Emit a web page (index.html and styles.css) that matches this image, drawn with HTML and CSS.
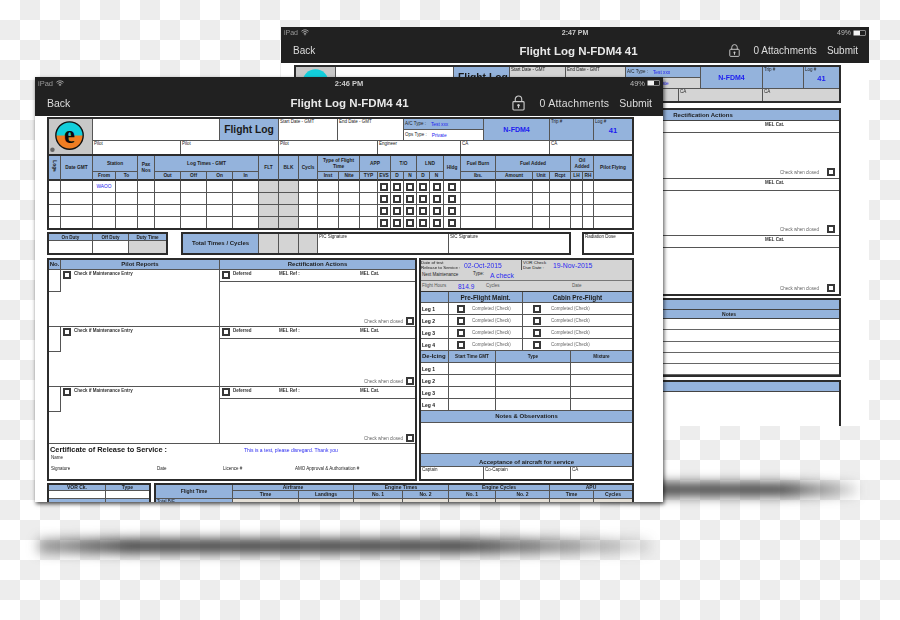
FILE: index.html
```html
<!DOCTYPE html>
<html lang="en">
<head>
<meta charset="utf-8">
<title>Flight Log</title>
<link rel="stylesheet" href="styles.css">
</head>
<body>
<div class="floor floor-back"></div>
<div class="floor floor-main"></div>

<section class="win win-back">
  <header class="bar">
    <div class="status">
      <span class="st-left">iPad <svg class="wifi" viewBox="0 0 10 8"><path d="M0.5 2.8a6.4 6.4 0 0 1 9 0M2 4.4a4.2 4.2 0 0 1 6 0M3.5 5.9a2 2 0 0 1 3 0"/><circle cx="5" cy="7" r=".8"/></svg></span>
      <span class="st-time">2:47 PM</span>
      <span class="st-right">49% <span class="batt"><span class="batt-fill"></span></span></span>
    </div>
    <nav class="nav">
      <span class="nav-back">Back</span>
      <span class="nav-title">Flight Log N-FDM4 41</span>
      <span class="nav-right">
        <svg class="lock" viewBox="0 0 14 17"><path d="M3.5 7V4.5a3.5 3.5 0 0 1 7 0V7"/><rect x="1" y="7" width="12" height="9" rx="1"/><circle cx="7" cy="11" r="1.3"/><path d="M7 11v3"/></svg>
        <span class="nav-att">0 Attachments</span>
        <span class="nav-sub">Submit</span>
      </span>
    </nav>
  </header>
  <div class="form form-back">
    <div class="box bhdr">
      <div class="c n-b logo-cell back-logo"><svg class="logo" viewBox="0 0 42 37"><circle class="lg-a" cx="21" cy="16.5" r="14"/></svg></div>
      <div class="c bh-blank"></div>
      <div class="c blue bh-fl"><span class="fl-title">Flight Log</span></div>
      <div class="c grey bh-sd"><span class="lbl">Start Date - GMT</span></div>
      <div class="c grey bh-ed"><span class="lbl">End Date - GMT</span></div>
      <div class="c blue bh-ac"><span class="lbl">A/C Type :</span><span class="val-s">Test xxx</span></div>
      <div class="c grey bh-ops"><span class="lbl">Ops Type :</span><span class="val-s">Private</span></div>
      <div class="c blue center bh-reg"><span class="val-b">N-FDM4</span></div>
      <div class="c blue bh-trip"><span class="lbl">Trip #</span></div>
      <div class="c blue bh-log n-r"><span class="lbl">Log #</span><span class="val-n">41</span></div>
      <div class="c grey n-b bh-r3a"><span class="lbl">Pilot</span></div>
      <div class="c grey n-b bh-r3b"><span class="lbl">CA</span></div>
      <div class="c grey n-b n-r bh-r3c"><span class="lbl">CA</span></div>
    </div>
    <div class="box bk-reports">
      <div class="bk-head"><span class="th-m bk-h1">Pilot Reports</span><span class="th-m bk-h2">Rectification Actions</span></div>
      <div class="bk-top"><span class="lbl-b">MEL Cat.</span></div>
      <div class="bk-body"><span class="lbl-g">Check when closed</span><span class="cb"></span></div>
      <div class="bk-top"><span class="lbl-b">MEL Cat.</span></div>
      <div class="bk-body"><span class="lbl-g">Check when closed</span><span class="cb"></span></div>
      <div class="bk-top"><span class="lbl-b">MEL Cat.</span></div>
      <div class="bk-body n-b"><span class="lbl-g">Check when closed</span><span class="cb"></span></div>
    </div>
    <div class="box bk-notes">
      <div class="bn-blue"></div>
      <div class="bn-blue bn-title"><span class="th-s">Notes</span></div>
      <div class="bn-row"></div>
      <div class="bn-row"></div>
      <div class="bn-row"></div>
      <div class="bn-row"></div>
      <div class="bn-row n-b"></div>
    </div>
    <div class="bk-last"><div class="bn-blue"></div></div>
  </div>
</section>

<section class="win win-main">
  <header class="bar">
    <div class="status">
      <span class="st-left">iPad <svg class="wifi" viewBox="0 0 10 8"><path d="M0.5 2.8a6.4 6.4 0 0 1 9 0M2 4.4a4.2 4.2 0 0 1 6 0M3.5 5.9a2 2 0 0 1 3 0"/><circle cx="5" cy="7" r=".8"/></svg></span>
      <span class="st-time">2:46 PM</span>
      <span class="st-right">49% <span class="batt"><span class="batt-fill"></span></span></span>
    </div>
    <nav class="nav">
      <span class="nav-back">Back</span>
      <span class="nav-title">Flight Log N-FDM4 41</span>
      <span class="nav-right">
        <svg class="lock" viewBox="0 0 14 17"><path d="M3.5 7V4.5a3.5 3.5 0 0 1 7 0V7"/><rect x="1" y="7" width="12" height="9" rx="1"/><circle cx="7" cy="11" r="1.3"/><path d="M7 11v3"/></svg>
        <span class="nav-att">0 Attachments</span>
        <span class="nav-sub">Submit</span>
      </span>
    </nav>
  </header>

  <div class="form">
    <div class="box hdr">
      <div class="c n-b logo-cell h-logo">
        <svg class="logo" viewBox="0 0 44 35">
          <circle class="lg-a" cx="21" cy="16.5" r="14"/>
          <path class="lg-b" d="M7 16.5h28a14 14 0 0 1-28 0z"/>
          <circle class="lg-r" cx="21" cy="16.5" r="14"/>
          <text class="lg-e" x="21" y="24" text-anchor="middle">e</text>
          <circle class="lg-d" cx="3.5" cy="31" r="2.3"/>
        </svg>
      </div>
      <div class="c h-blank"></div>
      <div class="c blue center h-fl"><span class="fl-title">Flight Log</span></div>
      <div class="c h-sd"><span class="lbl">Start Date - GMT</span></div>
      <div class="c h-ed"><span class="lbl">End Date - GMT</span></div>
      <div class="c blue h-ac"><span class="lbl">A/C Type :</span><span class="val-s">Test xxx</span></div>
      <div class="c h-ops"><span class="lbl">Ops Type :</span><span class="val-s">Private</span></div>
      <div class="c blue center h-reg"><span class="val-b">N-FDM4</span></div>
      <div class="c blue h-trip"><span class="lbl">Trip #</span></div>
      <div class="c blue n-r h-log"><span class="lbl">Log #</span><span class="val-n">41</span></div>
      <div class="c n-b h-p1"><span class="lbl">Pilot</span></div>
      <div class="c n-b h-p2"><span class="lbl">Pilot</span></div>
      <div class="c n-b h-p3"><span class="lbl">Pilot</span></div>
      <div class="c n-b h-eng"><span class="lbl">Engineer</span></div>
      <div class="c n-b h-ca1"><span class="lbl">CA</span></div>
      <div class="c n-b n-r h-ca2"><span class="lbl">CA</span></div>
    </div>

    <div class="box no-top">
      <table class="fl">
        <colgroup>
          <col class="w12"><col class="w32"><col class="w23"><col class="w22"><col class="w17"><col class="w26"><col class="w26"><col class="w26"><col class="w26"><col class="w20"><col class="w20"><col class="w19"><col class="w21"><col class="w21"><col class="w18"><col class="w13"><col class="w13"><col class="w13"><col class="w13"><col class="w14"><col class="w17"><col class="w35"><col class="w37"><col class="w17"><col class="w21"><col class="w12"><col class="w11"><col class="w38">
        </colgroup>
        <thead>
          <tr class="r-h1">
            <th rowspan="2"><span class="vert">Log</span><br>#</th><th rowspan="2">Date GMT</th><th colspan="2">Station</th><th rowspan="2">Pax<br>Nos</th><th colspan="4">Log Times - GMT</th><th rowspan="2">FLT</th><th rowspan="2">BLK</th><th rowspan="2">Cycls</th><th colspan="2">Type of Flight<br>Time</th><th colspan="2">APP</th><th colspan="2">T/O</th><th colspan="2">LND</th><th rowspan="2">Hldg</th><th>Fuel Burn</th><th colspan="3">Fuel Added</th><th colspan="2">Oil<br>Added</th><th rowspan="2" class="n-r">Pilot Flying</th>
          </tr>
          <tr class="r-h2">
            <th>From</th><th>To</th><th>Out</th><th>Off</th><th>On</th><th>In</th><th>Inst</th><th>Nite</th><th>TYP</th><th>EVS</th><th>D</th><th>N</th><th>D</th><th>N</th><th>lbs.</th><th>Amount</th><th>Unit</th><th>Rcpt</th><th>LH</th><th>RH</th>
          </tr>
        </thead>
        <tbody>
          <tr class="r-b"><td></td><td></td><td class="wa">WAOO</td><td></td><td></td><td></td><td></td><td></td><td></td><td class="g"></td><td class="g"></td><td></td><td></td><td></td><td></td><td><span class="cb"></span></td><td><span class="cb"></span></td><td><span class="cb"></span></td><td><span class="cb"></span></td><td><span class="cb"></span></td><td><span class="cb"></span></td><td></td><td></td><td></td><td></td><td></td><td></td><td class="n-r"></td></tr>
          <tr class="r-b"><td></td><td></td><td></td><td></td><td></td><td></td><td></td><td></td><td></td><td class="g"></td><td class="g"></td><td></td><td></td><td></td><td></td><td><span class="cb"></span></td><td><span class="cb"></span></td><td><span class="cb"></span></td><td><span class="cb"></span></td><td><span class="cb"></span></td><td><span class="cb"></span></td><td></td><td></td><td></td><td></td><td></td><td></td><td class="n-r"></td></tr>
          <tr class="r-b"><td></td><td></td><td></td><td></td><td></td><td></td><td></td><td></td><td></td><td class="g"></td><td class="g"></td><td></td><td></td><td></td><td></td><td><span class="cb"></span></td><td><span class="cb"></span></td><td><span class="cb"></span></td><td><span class="cb"></span></td><td><span class="cb"></span></td><td><span class="cb"></span></td><td></td><td></td><td></td><td></td><td></td><td></td><td class="n-r"></td></tr>
          <tr class="r-l"><td></td><td></td><td></td><td></td><td></td><td></td><td></td><td></td><td></td><td class="g"></td><td class="g"></td><td></td><td></td><td></td><td></td><td><span class="cb"></span></td><td><span class="cb"></span></td><td><span class="cb"></span></td><td><span class="cb"></span></td><td><span class="cb"></span></td><td><span class="cb"></span></td><td></td><td></td><td></td><td></td><td></td><td></td><td class="n-r"></td></tr>
        </tbody>
      </table>
    </div>

    <div class="totals">
      <div class="box duty">
        <div class="c blue center du-h"><span class="th-xs">On Duty</span></div>
        <div class="c blue center du-h"><span class="th-xs">Off Duty</span></div>
        <div class="c blue center n-r du-h"><span class="th-xs">Duty Time</span></div>
        <div class="c n-b"></div>
        <div class="c n-b"></div>
        <div class="c grey n-b n-r"></div>
      </div>
      <div class="box tot">
        <div class="c blue center n-b"><span class="th-m">Total Times / Cycles</span></div>
        <div class="c grey n-b"></div>
        <div class="c grey n-b"></div>
        <div class="c grey n-b"></div>
        <div class="c n-b"><span class="lbl">PIC Signature</span></div>
        <div class="n-b"><span class="lbl">SIC Signature</span></div>
      </div>
      <div class="box rad"><span class="lbl">Radiation Dose</span></div>
    </div>

    <div class="lower">
      <div class="box reports">
        <div class="rep-head">
          <div class="c blue center"><span class="th-m">No.</span></div>
          <div class="c blue center"><span class="th-m">Pilot Reports</span></div>
          <div class="c blue center n-r"><span class="th-m">Rectification Actions</span></div>
        </div>
        <div class="rep-row h57">
          <div class="rep-pilot"><div class="rep-no"></div><div class="rep-chk"><span class="cb"></span><span class="lbl-b">Check if Maintenance Entry</span></div></div>
          <div class="rep-act"><div class="act-top"><span class="cb"></span><span class="lbl-b a1">Deferred</span><span class="lbl-b a2">MEL Ref :</span><span class="lbl-b">MEL Cat.</span></div><div class="act-body"><span class="lbl-g">Check when closed</span><span class="cb"></span></div></div>
        </div>
        <div class="rep-row h60">
          <div class="rep-pilot"><div class="rep-no no-tall"></div><div class="rep-chk"><span class="cb"></span><span class="lbl-b">Check if Maintenance Entry</span></div></div>
          <div class="rep-act"><div class="act-top"><span class="cb"></span><span class="lbl-b a1">Deferred</span><span class="lbl-b a2">MEL Ref :</span><span class="lbl-b">MEL Cat.</span></div><div class="act-body"><span class="lbl-g">Check when closed</span><span class="cb"></span></div></div>
        </div>
        <div class="rep-row h57">
          <div class="rep-pilot"><div class="rep-no no-tall"></div><div class="rep-chk"><span class="cb"></span><span class="lbl-b">Check if Maintenance Entry</span></div></div>
          <div class="rep-act"><div class="act-top"><span class="cb"></span><span class="lbl-b a1">Deferred</span><span class="lbl-b a2">MEL Ref :</span><span class="lbl-b">MEL Cat.</span></div><div class="act-body"><span class="lbl-g">Check when closed</span><span class="cb"></span></div></div>
        </div>
        <div class="cert">
          <div class="cert-1"><span class="cert-title">Certificate of Release to Service :</span><span class="cert-msg">This is a test, please disregard. Thank you</span></div>
          <div class="cert-name"><span class="lbl">Name</span></div>
          <div class="cert-sig"><span class="lbl">Signature</span><span class="lbl">Date</span><span class="lbl">Licence #</span><span class="lbl">AMO Approval &amp; Authorisation #</span></div>
        </div>
      </div>

      <div class="box side">
        <div class="s-date grey">
          <div class="c grey sd-1 n-r"><span class="lbl-2">Date of test<br>Release to Service :</span><span class="val-d">02-Oct-2015</span></div>
          <div class="grey sd-1"><span class="lbl-2">VOR Check<br>Due Date :</span><span class="val-d">19-Nov-2015</span></div>
        </div>
        <div class="s-next grey"><span class="lbl">Next Maintenance</span><span class="lbl s-type">Type:</span><span class="val-m">A check</span></div>
        <div class="s-hours grey"><span class="lbl-l hrs-1">Flight Hours</span><span class="val-h">814.9</span><span class="lbl-l hrs-2">Cycles</span><span class="lbl-l">Date</span></div>
        <div class="s-legs s-head">
          <div class="c blue"></div><div class="c blue center"><span class="th-l">Pre-Flight Maint.</span></div><div class="c blue center n-r"><span class="th-l">Cabin Pre-Flight</span></div>
        </div>
        <div class="s-legs s-leg"><div class="c leg"><span class="lbl-h">Leg 1</span></div><div class="c chk"><span class="cb"></span><span class="lbl-g">Completed (Check)</span></div><div class="c chk n-r"><span class="cb"></span><span class="lbl-g">Completed (Check)</span></div></div>
        <div class="s-legs s-leg"><div class="c leg"><span class="lbl-h">Leg 2</span></div><div class="c chk"><span class="cb"></span><span class="lbl-g">Completed (Check)</span></div><div class="c chk n-r"><span class="cb"></span><span class="lbl-g">Completed (Check)</span></div></div>
        <div class="s-legs s-leg"><div class="c leg"><span class="lbl-h">Leg 3</span></div><div class="c chk"><span class="cb"></span><span class="lbl-g">Completed (Check)</span></div><div class="c chk n-r"><span class="cb"></span><span class="lbl-g">Completed (Check)</span></div></div>
        <div class="s-legs s-leg"><div class="c leg"><span class="lbl-h">Leg 4</span></div><div class="c chk"><span class="cb"></span><span class="lbl-g">Completed (Check)</span></div><div class="c chk n-r"><span class="cb"></span><span class="lbl-g">Completed (Check)</span></div></div>
        <div class="s-ice s-ice-h">
          <div class="c blue leg"><span class="th-m">De-Icing</span></div><div class="c blue center"><span class="th-xs">Start Time GMT</span></div><div class="c blue center"><span class="th-xs">Type</span></div><div class="c blue center n-r"><span class="th-xs">Mixture</span></div>
        </div>
        <div class="s-ice"><div class="c leg"><span class="lbl-h">Leg 1</span></div><div class="c"></div><div class="c"></div><div class="c n-r"></div></div>
        <div class="s-ice"><div class="c leg"><span class="lbl-h">Leg 2</span></div><div class="c"></div><div class="c"></div><div class="c n-r"></div></div>
        <div class="s-ice"><div class="c leg"><span class="lbl-h">Leg 3</span></div><div class="c"></div><div class="c"></div><div class="c n-r"></div></div>
        <div class="s-ice"><div class="c leg"><span class="lbl-h">Leg 4</span></div><div class="c"></div><div class="c"></div><div class="c n-r"></div></div>
        <div class="c blue center n-r s-notes"><span class="th-m">Notes &amp; Observations</span></div>
        <div class="c n-r s-blank"></div>
        <div class="c blue center n-r s-acc"><span class="th-m">Acceptance of aircraft for service</span></div>
        <div class="s-crew"><div class="c n-b"><span class="lbl">Captain</span></div><div class="c n-b"><span class="lbl">Co-Captain</span></div><div class="c n-b n-r"><span class="lbl">CA</span></div></div>
      </div>
    </div>

    <div class="bottom">
      <div class="box vor">
        <div class="c blue center v-h"><span class="th-s">VOR Ck.</span></div>
        <div class="c blue center n-r v-h"><span class="th-s">Type</span></div>
        <div class="c v-b"></div><div class="c n-r v-b"></div>
        <div class="c blue v-e"></div><div class="c blue n-r v-e"></div>
      </div>
      <div class="box ft">
        <div class="c blue center ft-t"><span class="th-s">Flight Time</span></div>
        <div class="c blue center ft-a"><span class="th-s">Airframe</span></div>
        <div class="c blue center ft-e"><span class="th-s">Engine Times</span></div>
        <div class="c blue center ft-c"><span class="th-s">Engine Cycles</span></div>
        <div class="c blue center n-r ft-u"><span class="th-s">APU</span></div>
        <div class="c blue center"><span class="th-s">Time</span></div>
        <div class="c blue center"><span class="th-s">Landings</span></div>
        <div class="c blue center"><span class="th-s">No. 1</span></div>
        <div class="c blue center"><span class="th-s">No. 2</span></div>
        <div class="c blue center"><span class="th-s">No. 1</span></div>
        <div class="c blue center"><span class="th-s">No. 2</span></div>
        <div class="c blue center"><span class="th-s">Time</span></div>
        <div class="c blue center n-r"><span class="th-s">Cycles</span></div>
        <div class="c blue ft-l"><span class="lbl">Total B/F</span></div>
        <div class="c ft-x"></div><div class="c ft-x"></div><div class="c ft-x"></div><div class="c ft-x"></div><div class="c ft-x"></div><div class="c ft-x"></div><div class="c ft-x"></div><div class="c n-r ft-x"></div>
      </div>
    </div>
  </div>
</section>
</body>
</html>
```

FILE: styles.css
```css
* { box-sizing: border-box; }
html, body { margin: 0; padding: 0; }
body {
  position: relative;
  width: 900px;
  height: 620px;
  overflow: hidden;
  font-family: "Liberation Sans", Arial, sans-serif;
  font-size: 5px;
  color: #151515;
  background-color: #fff;
  background-image: conic-gradient(#ededed 25%, #fff 0 50%, #ededed 0 75%, #fff 0);
  background-size: 40px 40px;
}

/* free-canvas pieces */
.win { position: absolute; background: #fff; overflow: hidden; }
.win-back { left: 281px; top: 27px; width: 588px; height: 399px; }
.win-main { left: 35px; top: 77px; width: 628px; height: 425px; box-shadow: 1px 2px 4px rgba(0,0,0,.7); }
.floor { position: absolute; background: linear-gradient(90deg, rgba(60,60,60,.45), #3c3c3c 15%, #3c3c3c 70%, rgba(60,60,60,.12)); filter: blur(6px); }
.floor-main { left: 38px; top: 539px; width: 612px; height: 14px; }
.floor-back { left: 600px; top: 483px; width: 258px; height: 13px; }

/* top bar */
.bar { background: #212121; color: #ddd; display: flex; flex-direction: column; height: 39px; filter: blur(.3px); }
.win-back .bar { height: 36px; }
.status { display: grid; grid-template-columns: 1fr auto 1fr; align-items: center; height: 12px; padding: 0 3px; font-size: 7.5px; color: #bbb; }
.win-back .status { height: 11px; font-size: 7px; }
.st-left { display: flex; align-items: center; gap: 3px; color: #999; }
.st-time { font-weight: 700; color: #ccc; }
.st-right { display: flex; align-items: center; justify-content: flex-end; gap: 1px; }
.wifi { width: 8px; height: 6.5px; }
.wifi path { fill: none; stroke: #bbb; stroke-width: 1; }
.wifi circle { fill: #bbb; }
.batt { width: 13px; height: 6px; border: 1px solid #888; border-radius: 1px; display: inline-block; margin-left: 1px; }
.batt-fill { display: block; width: 6px; height: 100%; background: #f2f2f2; }
.nav { flex: 1; display: grid; grid-template-columns: 1fr auto 1fr; align-items: center; padding: 0 11px 0 12px; font-size: 10.5px; }
.nav-title { font-size: 11.5px; font-weight: 700; color: #e8e8e8; }
.nav-right { display: flex; align-items: center; justify-content: flex-end; gap: 10px; }
.nav-att { margin-left: 5px; letter-spacing: .25px; }
.lock { width: 13px; height: 16px; }
.lock path, .lock rect { fill: none; stroke: #ccc; stroke-width: 1.2; }
.lock circle { fill: #ccc; }
.win-back .nav { font-size: 10px; padding: 0 11px 0 12px; }
.win-back .nav-title { padding-left: 6px; }
.win-back .nav-att { letter-spacing: 0; margin-left: 4px; }
.win-back .lock { width: 11px; height: 15px; }

/* form primitives */
.form { padding: 1px 29px 0 12px; filter: blur(.3px); }
.box { border: 2px solid #2c2c2c; background: #fff; }
.no-top { border-top: 0; }
.c { border-right: 1px solid #555; border-bottom: 1px solid #555; min-width: 0; overflow: hidden; }
.n-r { border-right: 0; }
.n-b { border-bottom: 0; }
.blue { background: #94b3dc; }
.grey { background: #d4d4d4; }
.center { display: flex; align-items: center; justify-content: center; text-align: center; }
.lbl, .lbl-l, .lbl-b, .lbl-g, .lbl-h, .lbl-2 { font-size: 4.5px; line-height: 6px; white-space: nowrap; }
.lbl { display: block; padding-left: 1px; color: #222; }
.lbl-l { color: #555; }
.lbl-b { font-weight: 700; color: #333; }
.lbl-g { color: #666; }
.lbl-h { font-weight: 700; font-size: 5px; }
.lbl-2 { display: block; font-size: 4.6px; line-height: 5px; }
.th-xs { font-size: 4.6px; font-weight: 700; line-height: 5px; color: #222; white-space: nowrap; }
.th-s { font-size: 5px; font-weight: 700; line-height: 5px; color: #222; white-space: nowrap; }
.th-m { font-size: 6px; font-weight: 700; line-height: 7px; color: #1c1c1c; white-space: nowrap; }
.th-l { font-size: 6.4px; font-weight: 700; line-height: 7px; color: #1c1c1c; white-space: nowrap; }
.cb { display: inline-block; flex: none; width: 8px; height: 8px; border: 2px solid #383838; background: #fff; vertical-align: middle; }
.val-s { font-size: 4.8px; color: #2323ee; margin-left: 5px; white-space: nowrap; }
.val-b { font-size: 7px; font-weight: 700; color: #1d1df0; }
.val-n { display: block; margin-top: 2px; font-size: 7.5px; font-weight: 700; color: #1d1df0; text-align: center; line-height: 8px; }
.fl-title { font-size: 10.3px; font-weight: 700; color: #1a1a1a; white-space: nowrap; }

/* main header */
.hdr { display: grid; grid-template-columns: 44px 88px 39px 59px 59px 40px 26px 57px 23px 66px 44px 38px; grid-template-rows: 11px 11px 13px; }
.logo-cell { background: #c8c8c8; }
.h-logo { grid-column: 1; grid-row: 1 / 4; }
.logo { display: block; width: 100%; height: 100%; }
.lg-a { fill: #12cfdc; }
.lg-b { fill: #ef7d22; }
.lg-r { fill: none; stroke: #111; stroke-width: 1.4; }
.lg-e { font-family: "Liberation Serif", serif; font-size: 25px; font-weight: 700; fill: #0b0b0b; }
.lg-d { fill: #666; }
.h-blank { grid-column: 2 / 4; grid-row: 1 / 3; }
.h-fl { grid-column: 4; grid-row: 1 / 3; }
.h-sd { grid-column: 5; grid-row: 1 / 3; }
.h-ed { grid-column: 6 / 8; grid-row: 1 / 3; }
.h-ac { grid-column: 8 / 10; grid-row: 1; display: flex; align-items: center; }
.h-ops { grid-column: 8 / 10; grid-row: 2; display: flex; align-items: center; }
.h-reg { grid-column: 10; grid-row: 1 / 3; }
.h-trip { grid-column: 11; grid-row: 1 / 3; }
.h-log { grid-column: 12; grid-row: 1 / 3; }
.h-p1 { grid-column: 2; grid-row: 3; }
.h-p2 { grid-column: 3 / 5; grid-row: 3; }
.h-p3 { grid-column: 5 / 7; grid-row: 3; }
.h-eng { grid-column: 7 / 9; grid-row: 3; }
.h-ca1 { grid-column: 9 / 11; grid-row: 3; }
.h-ca2 { grid-column: 11 / 13; grid-row: 3; }

/* flight table */
.fl { width: 583px; table-layout: fixed; border-collapse: separate; border-spacing: 0; }
.fl th, .fl td { padding: 0; border-right: 1px solid #555; border-bottom: 1px solid #555; overflow: hidden; line-height: 0; }
.fl th { background: #94b3dc; font-size: 4.8px; line-height: 5.4px; font-weight: 700; color: #222; text-align: center; white-space: nowrap; }
.fl td { text-align: center; }
.fl thead tr:last-child th { border-bottom: 2px solid #333; }
.fl thead th[rowspan] { border-bottom: 2px solid #333; }
.fl .n-r { border-right: 0; }
.r-h1 { height: 16px; }
.r-h2 { height: 9px; }
.r-b { height: 12px; }
.r-l { height: 11px; }
.r-l td { border-bottom: 0; }
.fl .g { background: #d4d4d4; }
.fl .wa { font-size: 4.8px; line-height: 6px; color: #2323ee; }
.vert { display: inline-block; transform: rotate(90deg); }
.w11 { width: 11px; } .w12 { width: 12px; } .w13 { width: 13px; } .w14 { width: 14px; } .w17 { width: 17px; }
.w18 { width: 18px; } .w19 { width: 19px; } .w20 { width: 20px; } .w21 { width: 21px; } .w22 { width: 22px; }
.w23 { width: 23px; } .w26 { width: 26px; } .w32 { width: 32px; } .w35 { width: 35px; } .w37 { width: 37px; } .w38 { width: 38px; }

/* totals */
.totals { display: flex; gap: 13px; margin-top: 2px; height: 23px; }
.duty { width: 121px; display: grid; grid-template-columns: 44px 36px 37px; grid-template-rows: 7px 12px; }
.tot { width: 390px; margin-right: -2px; display: grid; grid-template-columns: 76px 20px 20px 19px 131px 116px; }
.rad { width: 52px; }

/* lower */
.lower { display: flex; gap: 2px; margin-top: 3px; }
.reports { width: 370px; height: 223px; display: flex; flex-direction: column; }
.rep-head { display: grid; grid-template-columns: 12px 159px 195px; height: 10px; }
.rep-row { display: grid; grid-template-columns: 171px 195px; border-bottom: 1px solid #555; }
.h57 { height: 57px; }
.h60 { height: 60px; }
.rep-pilot { border-right: 1px solid #555; display: flex; align-items: flex-start; }
.rep-no { width: 12px; height: 22px; border-right: 1px solid #555; border-bottom: 1px solid #555; }
.no-tall { height: 25px; }
.rep-chk { display: flex; align-items: flex-start; gap: 3px; padding: 1px 0 0 2px; }
.rep-act { display: flex; flex-direction: column; }
.act-top { height: 12px; border-bottom: 1px solid #555; display: flex; align-items: flex-start; padding: 1px 0 0 2px; }
.a1 { width: 46px; margin-left: 3px; }
.a2 { width: 81px; }
.act-body { flex: 1; display: flex; align-items: flex-end; justify-content: flex-end; gap: 3px; padding: 0 1px 1px 0; }
.cert { flex: 1; padding: 1px 0 0 1px; display: flex; flex-direction: column; }
.cert-1 { display: flex; align-items: center; height: 9px; }
.cert-title { font-size: 7.4px; font-weight: 700; width: 194px; white-space: nowrap; }
.cert-msg { font-size: 5px; color: #2a2af0; white-space: nowrap; }
.cert-name { height: 12px; padding-top: 1px; }
.cert-sig { display: grid; grid-template-columns: 106px 66px 72px 1fr; }

.side { width: 215px; height: 223px; display: flex; flex-direction: column; }
.s-date { display: grid; grid-template-columns: 101px 110px; height: 10px; border-bottom: 1px solid #777; }
.sd-1 { display: flex; align-items: center; border-bottom: 0; border-right: 1px solid #555; }
.sd-1:last-child { border-right: 0; padding-left: 1px; }
.val-d { font-size: 6.8px; color: #2a2af0; margin-left: 2px; white-space: nowrap; }
.sd-1 .lbl-2 { width: 41px; white-space: nowrap; font-size: 4.4px; }
.sd-1:last-child .lbl-2 { width: 28px; }
.s-next { height: 11px; display: flex; align-items: center; border-bottom: 1px solid #777; }
.s-next .lbl { width: 39px; }
.s-next .s-type { width: 17px; margin: -3px 0 0 13px; padding: 0; }
.val-m { font-size: 6.8px; color: #2a2af0; }
.s-hours { height: 11px; display: flex; align-items: center; border-bottom: 1px solid #333; padding-left: 1px; }
.hrs-1 { width: 36px; }
.val-h { font-size: 6.5px; color: #2a2af0; width: 28px; }
.hrs-2 { width: 86px; }
.s-legs { display: grid; grid-template-columns: 28px 74px 109px; }
.s-head { height: 11px; }
.s-leg { height: 12px; }
.leg { display: flex; align-items: center; padding-left: 1px; white-space: nowrap; }
.chk { display: flex; align-items: center; padding-left: 8px; gap: 7px; }
.chk.n-r { padding-left: 10px; gap: 10px; }
.s-ice { display: grid; grid-template-columns: 28px 47px 75px 61px; height: 12px; }
.s-notes { height: 12px; }
.s-blank { height: 31px; }
.s-acc { height: 13px; align-items: flex-end; }
.s-crew { display: grid; grid-template-columns: 63px 87px 61px; height: 12px; }

/* bottom */
.bottom { display: flex; gap: 3px; margin-top: 2px; }
.vor { width: 104px; height: 30px; display: grid; grid-template-columns: 57px 43px; grid-template-rows: 6px 8px 12px; }
.ft { width: 480px; height: 30px; display: grid; grid-template-columns: 77px 66px 55px 49px 46px 47px 54px 44px 38px; grid-template-rows: 6px 8px 12px; }
.ft-t { grid-row: 1 / 3; }
.ft-a { grid-column: 2 / 4; }
.ft-e { grid-column: 4 / 6; }
.ft-c { grid-column: 6 / 8; }
.ft-u { grid-column: 8 / 10; }
.ft-x { background: #e4dfd6; }

/* back form */
.form-back { padding: 2px 28px 0 13px; }
.bhdr { width: 547px; display: grid; grid-template-columns: 40px 118px 56px 56px 60px 53px 22px 62px 41px 35px; grid-template-rows: 11px 11px 12px; }
.back-logo { grid-column: 1; grid-row: 1 / 4; }
.bh-blank { grid-column: 2; grid-row: 1 / 4; }
.bh-fl { grid-column: 3; grid-row: 1 / 3; padding: 5px 0 0 4px; }
.bh-sd { grid-column: 4; grid-row: 1 / 3; }
.bh-ed { grid-column: 5; grid-row: 1 / 3; }
.bh-ac { grid-column: 6 / 8; grid-row: 1; display: flex; align-items: center; }
.bh-ops { grid-column: 6 / 8; grid-row: 2; display: flex; align-items: center; }
.bh-reg { grid-column: 8; grid-row: 1 / 3; }
.bh-trip { grid-column: 9; grid-row: 1 / 3; }
.bh-log { grid-column: 10; grid-row: 1 / 3; }
.bh-r3a { grid-column: 3 / 7; grid-row: 3; }
.bh-r3b { grid-column: 7 / 9; grid-row: 3; }
.bh-r3c { grid-column: 9 / 11; grid-row: 3; }
.bk-reports { width: 547px; height: 188px; margin-top: 5px; display: flex; flex-direction: column; }
.bk-head { display: flex; height: 11px; background: #94b3dc; border-bottom: 1px solid #444; flex: none; }
.bk-h1 { width: 271px; text-align: center; line-height: 10px; }
.bk-h2 { flex: 1; text-align: center; line-height: 10px; }
.bk-top { height: 12px; border-bottom: 1px solid #555; padding-left: 469px; flex: none; line-height: 6px; }
.bk-body { height: 45.5px; border-bottom: 1px solid #555; flex: none; display: flex; align-items: flex-end; justify-content: flex-end; gap: 8px; padding: 0 4px 2px 0; }
.bk-body.n-b { border-bottom: 0; flex: 1; height: auto; }
.bk-notes { width: 547px; margin-top: 2px; }
.bn-blue { height: 9.5px; background: #94b3dc; border-bottom: 1px solid #444; }
.bn-title { padding-left: 323px; width: 100%; text-align: center; line-height: 9px; }
.bn-row { height: 11.3px; border-bottom: 1px solid #666; }
.bk-last { width: 547px; height: 50px; margin-top: 3px; border: 2px solid #2c2c2c; border-bottom: 0; border-left: 0; }
```
